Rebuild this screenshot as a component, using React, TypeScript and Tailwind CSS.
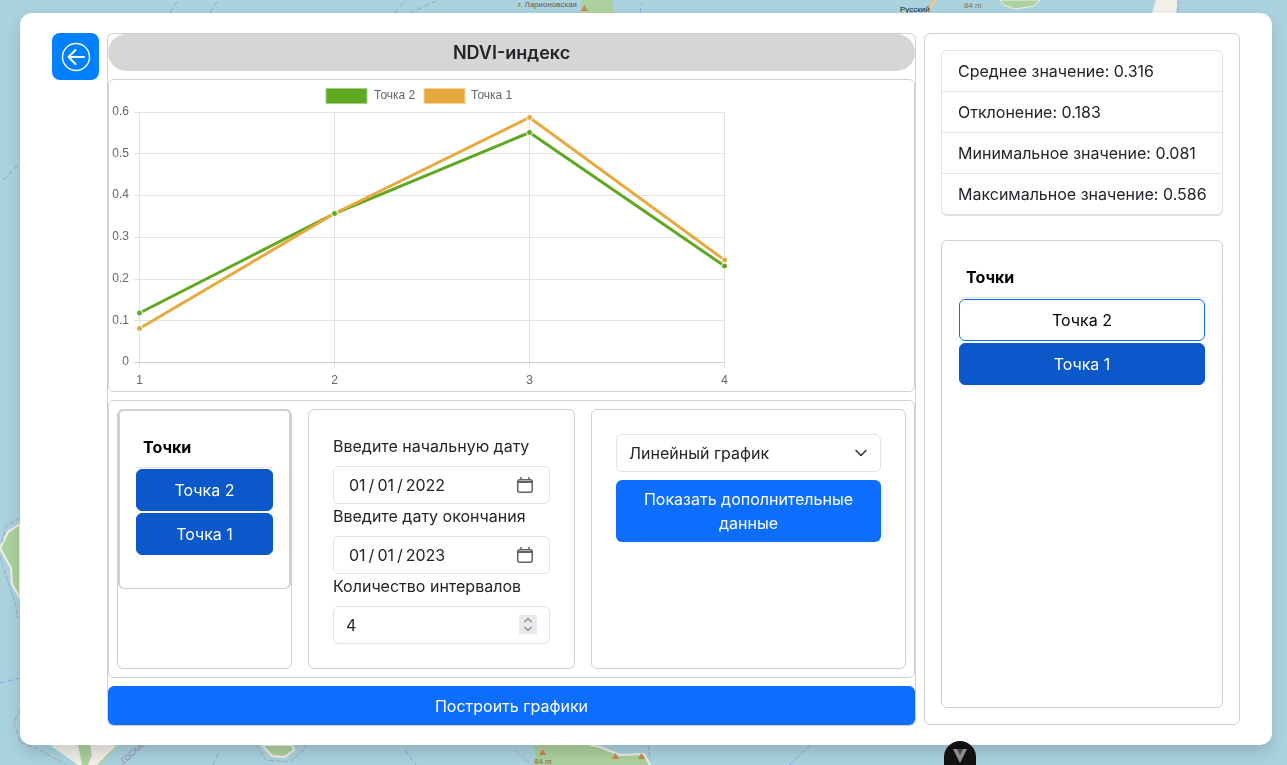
import React from "react";

const green = "#5fa821";
const orange = "#e8a93f";
const xs = [139.5, 334.5, 529.5, 724.5];
const ys = [112.5, 153.5, 195.5, 237.5, 279.5, 320.5, 362.5];
const labelYs = [112.5, 154.5, 195.5, 237.5, 279.5, 321.5, 362.5];
const pointsGreen = [313, 213.5, 132.5, 266];
const pointsOrange = [328.5, 213.5, 117.5, 260];

const border = "#a5a5c0";
const boundary = "#8a9fe8";

const MapBackground = () => (
  <svg className="absolute inset-0" width="1287" height="765" viewBox="0 0 1287 765">
    <rect width="1287" height="765" fill="#aad3df" />
    {/* left edge */}
    <path d="M0 548 L8 532 L20 524 L20 598 L12 584 L11 568 Z" fill="#add19e" stroke="#f2efe9" strokeWidth="2" />
    <path d="M20 518 L6 526 L2 543 M0 556 L8 582 L16 606 L17 617 L20 617" fill="none" stroke={border} strokeWidth="1" strokeDasharray="5 2" />
    <path d="M0 683 L20 678" fill="none" stroke={boundary} strokeWidth="1" strokeDasharray="5 3" />
    <path d="M3 180 L20 163" fill="none" stroke={boundary} strokeWidth="1" strokeDasharray="5 3" />
    <path d="M20 710 L14 722 L20 742 L40 750 L66 765" fill="none" stroke={border} strokeWidth="1" strokeDasharray="5 2" />
    {/* bottom edge */}
    <path d="M50 745 L118 745 L98 765 L78 765 Z" fill="#f2efe9" />
    <path d="M78 745 L90 745 L92 755 L88 765 L82 765 Z" fill="#add19e" />
    <path d="M118 745 L98 765" fill="none" stroke="#add19e" strokeWidth="1.5" />
    <path d="M122 765 L145 745" fill="none" stroke={border} strokeWidth="1" strokeDasharray="5 2" />
    <text x="124" y="764" fontSize="8" fill="#9a8fb0" fontFamily="Liberation Sans, sans-serif" transform="rotate(-42 124 764)">ГОСКАЯ</text>
    <path d="M262 745 L272 756 L285 757 L294 750 L292 745 Z" fill="#add19e" stroke="#f2efe9" strokeWidth="2" />
    <path d="M256 745 L266 760 L290 762 L304 750 L305 745" fill="none" stroke={border} strokeWidth="1" strokeDasharray="5 2" />
    <path d="M213 765 L220 750" fill="none" stroke={boundary} strokeWidth="1" strokeDasharray="5 3" />
    <path d="M405 750 L416 765" fill="none" stroke={boundary} strokeWidth="1" strokeDasharray="5 3" />
    <path d="M534 745 L536 765 L650 765 L644 754 L620 755 L600 747 L590 745 Z" fill="#add19e" />
    <path d="M590 745 L600 747 L620 755 L644 754 L650 765" fill="none" stroke="#f2efe9" strokeWidth="2" />
    <path d="M516 750 L532 765 M648 745 L650 760" fill="none" stroke={border} strokeWidth="1" strokeDasharray="5 2" />
    <path d="M539 755 L542.5 749 L546 755 Z M612 759 L615.5 753 L619 759 Z M638 759 L641.5 753 L645 759 Z" fill="#c98a4b" />
    <path d="M790 765 L810 745" fill="none" stroke={boundary} strokeWidth="1" strokeDasharray="5 3" />
    {/* top edge */}
    <path d="M395 13 L405 0 M170 13 L178 0 M210 13 L218 0 M410 13 L438 0 M640 13 L642 3" fill="none" stroke={boundary} strokeWidth="1" strokeDasharray="5 3" />
    <path d="M580 13 L582 0 L612 0 L614 13 Z" fill="#add19e" />
    <path d="M581 11 L584.5 5 L588 11 Z" fill="#c98a4b" />
    <path d="M1000 0 L1040 0 L1034 6 L1015 9 L1004 5 Z" fill="#add19e" stroke="#f2efe9" />
    <path d="M1152 13 L1156 0 L1178 0 L1176 13 Z" fill="#f2efe9" />
    <path d="M1178 0 L1178 13" stroke={border} strokeDasharray="5 2" />
    <path d="M925 13 L936 0" stroke="#f0c88a" strokeWidth="3" />
    <g fontFamily="Liberation Sans, sans-serif" fontSize="8">
      <text x="518" y="7" fill="#6b5a4a">г. Ларионовская</text>
      <text x="900" y="12" fill="#222">Русский</text>
      <text x="964" y="8" fill="#8a6d4a">84 m</text>
      <text x="534" y="764" fill="#8a6d4a">84 m</text>
    </g>
  </svg>
);

const Chart = () => (
  <svg className="absolute left-0 top-0" width="805" height="311" viewBox="109 80 805 311">
    <g stroke="#e2e2e2" strokeWidth="1">
      {ys.slice(0, 6).map((y) => (
        <line key={y} x1="134" x2="724.5" y1={y} y2={y} />
      ))}
      {xs.map((x) => (
        <line key={x} x1={x} x2={x} y1="112" y2="368" />
      ))}
      <line x1="134" x2="724.5" y1="362.5" y2="362.5" stroke="#cfcfcf" />
    </g>
    <g fontFamily="Liberation Sans, sans-serif" fontSize="12" fill="#666">
      {["0.6", "0.5", "0.4", "0.3", "0.2", "0.1", "0"].map((t, i) => (
        <text key={t} x="129" y={labelYs[i] + 2} textAnchor="end">{t}</text>
      ))}
      {xs.map((x, i) => (
        <text key={x} x={x} y="384" textAnchor="middle">{i + 1}</text>
      ))}
      <text x="374" y="99">Точка 2</text>
      <text x="471" y="99">Точка 1</text>
    </g>
    <rect x="326" y="88.5" width="41" height="15" fill={green} stroke="#a9d08a" />
    <rect x="424" y="88.5" width="41" height="15" fill={orange} stroke="#f3d49c" />
    <polyline points={xs.map((x, i) => `${x},${pointsGreen[i]}`).join(" ")} fill="none" stroke={green} strokeWidth="3" />
    <polyline points={xs.map((x, i) => `${x},${pointsOrange[i]}`).join(" ")} fill="none" stroke={orange} strokeWidth="3" />
    {xs.map((x, i) => (
      <circle key={x} cx={x} cy={pointsOrange[i]} r="3" fill={orange} stroke="#fff" strokeWidth="1" />
    ))}
    {xs.map((x, i) => (
      <circle key={x} cx={x} cy={pointsGreen[i]} r="3" fill={green} stroke="#fff" strokeWidth="1" />
    ))}
  </svg>
);

const fieldClass =
  "w-full h-[38px] border border-[#dee2e6] rounded-md bg-white px-3 text-[16px] text-[#212529] outline-none";

const PointButton = ({ label, outlined }: { label: string; outlined?: boolean }) => (
  <button
    className={
      outlined
        ? "w-full h-[42px] rounded-md border border-[#0d6efd] bg-white text-black text-[16px]"
        : "w-full h-[42px] rounded-md border border-[#0a58ca] bg-[#0a58ca] text-white text-[16px]"
    }
  >
    {label}
  </button>
);

const DateField = ({ year }: { year: string }) => (
  <div className="w-full h-[38px] border border-[#dee2e6] rounded-md bg-white pl-[15px] pr-[16px] flex items-center justify-between">
    <span className="flex">
      <span>01</span>
      <span className="mx-[3px]">/</span>
      <span>01</span>
      <span className="mx-[3px]">/</span>
      <span>{year}</span>
    </span>
    <svg width="16" height="16" viewBox="0 0 16 16" fill="none" stroke="#5f6368">
      <rect x="0.75" y="2.75" width="14.5" height="12.5" rx="2" strokeWidth="1.5" />
      <path d="M1 5h14" strokeWidth="2" />
      <path d="M4 0v3M12 0v3" strokeWidth="1.5" />
    </svg>
  </div>
);

export default function App() {
  return (
    <div
      className="relative w-[1287px] h-[765px] overflow-hidden text-[#212529]"
      style={{ fontFamily: "Inter, sans-serif" }}
    >
      <MapBackground />

      <div className="absolute left-[20px] top-[13px] w-[1252px] h-[732px] bg-white rounded-[12px] shadow-[0_8px_16px_rgba(0,0,0,0.15)] pt-[20px] pl-[32px] flex will-change-transform">
        <button className="w-[47px] h-[47px] rounded-lg bg-[#0080ff] flex items-center justify-center shrink-0">
          <svg width="30" height="30" viewBox="0 0 30 30" fill="none" stroke="#fff">
            <circle cx="15" cy="15" r="13.5" strokeWidth="1.4" />
            <path d="M23 15H7.5M14.5 8L7.5 15L14.5 22" strokeWidth="2" strokeLinecap="round" strokeLinejoin="round" />
          </svg>
        </button>

        <div className="ml-[8px] w-[809px] h-[693px] flex flex-col border border-[#cfcfcf] rounded-md">
          <div className="h-[37px] bg-[#d6d6d6] rounded-[20px] flex items-center justify-center text-[18px] font-semibold shrink-0 w-[807px]">
            NDVI-индекс
          </div>
          <div className="relative mt-[8px] w-[807px] h-[313px] border border-[#cfcfcf] rounded-md">
            <Chart />
          </div>
          <div className="mt-[8px] w-[807px] h-[278px] border border-[#cfcfcf] rounded-md p-[8px] flex">
            <div className="w-[175px] h-[260px] border border-[#cfcfcf] rounded-md">
              <div className="-mt-[1px] w-[173px] h-[180px] border-2 border-b border-[#d0d0d0] rounded-md px-[16px] pt-[24px]">
                <div className="font-bold text-[16px] text-black pl-[7px] h-[33px] border-b border-[#e5e5e5] leading-[24px]">Точки</div>
                <div className="flex flex-col gap-[2px] pt-[1px]">
                  <PointButton label="Точка 2" />
                  <PointButton label="Точка 1" />
                </div>
              </div>
            </div>

            <div className="ml-[16px] w-[267px] h-[260px] border border-[#cfcfcf] rounded-md px-[24px] pt-[24px]">
              <div className="leading-[24px] h-[32px]">Введите начальную дату</div>
              <DateField year="2022" />
              <div className="leading-[24px] h-[32px]">Введите дату окончания</div>
              <DateField year="2023" />
              <div className="leading-[24px] h-[32px]">Количество интервалов</div>
              <div className="relative">
                <input
                  type="number"
                  defaultValue={4}
                  className={`${fieldClass} [appearance:textfield] [&::-webkit-inner-spin-button]:appearance-none`}
                />
                <div className="absolute right-[13px] top-[9px] w-[18px] h-[19px] bg-[#e9e9ed] flex items-center justify-center">
                  <svg width="10" height="15" viewBox="0 0 10 15" fill="none" stroke="#8a8a90" strokeWidth="1.3">
                    <path d="M1.5 5L5 1.5L8.5 5M1.5 10L5 13.5L8.5 10" />
                  </svg>
                </div>
              </div>
            </div>

            <div className="ml-[16px] w-[315px] h-[260px] border border-[#cfcfcf] rounded-md px-[24px] pt-[24px]">
              <div className="relative">
                <select className={`${fieldClass} appearance-none`} defaultValue="line">
                  <option value="line">Линейный график</option>
                </select>
                <svg className="absolute right-[12px] top-[11px] pointer-events-none" width="16" height="16" viewBox="0 0 16 16" fill="none" stroke="#343a40" strokeWidth="1.6" strokeLinecap="round" strokeLinejoin="round">
                  <path d="M3 5.5L8 10.5L13 5.5" />
                </svg>
              </div>
              <button className="mt-[8px] w-full h-[62px] rounded-md bg-[#0d6efd] text-white text-[16px] leading-[24px] px-[12px]">
                Показать дополнительные данные
              </button>
            </div>
          </div>
          <button className="mt-[8px] w-[807px] h-[39px] rounded-md bg-[#0d6efd] text-white text-[16px]">
            Построить графики
          </button>
        </div>

        <div className="ml-[8px] w-[316px] h-[692px] border border-[#cfcfcf] rounded-md p-[16px]">
          <ul className="border border-[#dee2e6] rounded-md border-b-2">
            {[
              "Среднее значение: 0.316",
              "Отклонение: 0.183",
              "Минимальное значение: 0.081",
              "Максимальное значение: 0.586",
            ].map((t, i) => (
              <li key={t} className={i > 0 ? "h-[41px] pl-[16px] flex items-center border-t border-[#dee2e6]" : "h-[40px] pl-[16px] flex items-center"}>
                {t}
              </li>
            ))}
          </ul>
          <div className="mt-[24px] h-[468px] border border-[#cfcfcf] rounded-md px-[17px] pt-[24px]">
            <div className="font-bold text-[16px] text-black pl-[7px] h-[33px] border-b border-[#e5e5e5] leading-[24px]">Точки</div>
            <div className="flex flex-col gap-[2px] pt-[1px]">
              <PointButton label="Точка 2" outlined />
              <PointButton label="Точка 1" />
            </div>
          </div>
        </div>
      </div>

      <div className="absolute left-[944px] top-[741px] w-[32px] h-[40px] rounded-full bg-[#111] flex justify-center pt-[8px]">
        <svg width="14" height="14" viewBox="0 0 14 14">
          <path d="M0 0H14L7 14Z" fill="#8f8f8f" />
          <path d="M4 0H10L7 6Z" fill="#444" />
        </svg>
      </div>
    </div>
  );
}
